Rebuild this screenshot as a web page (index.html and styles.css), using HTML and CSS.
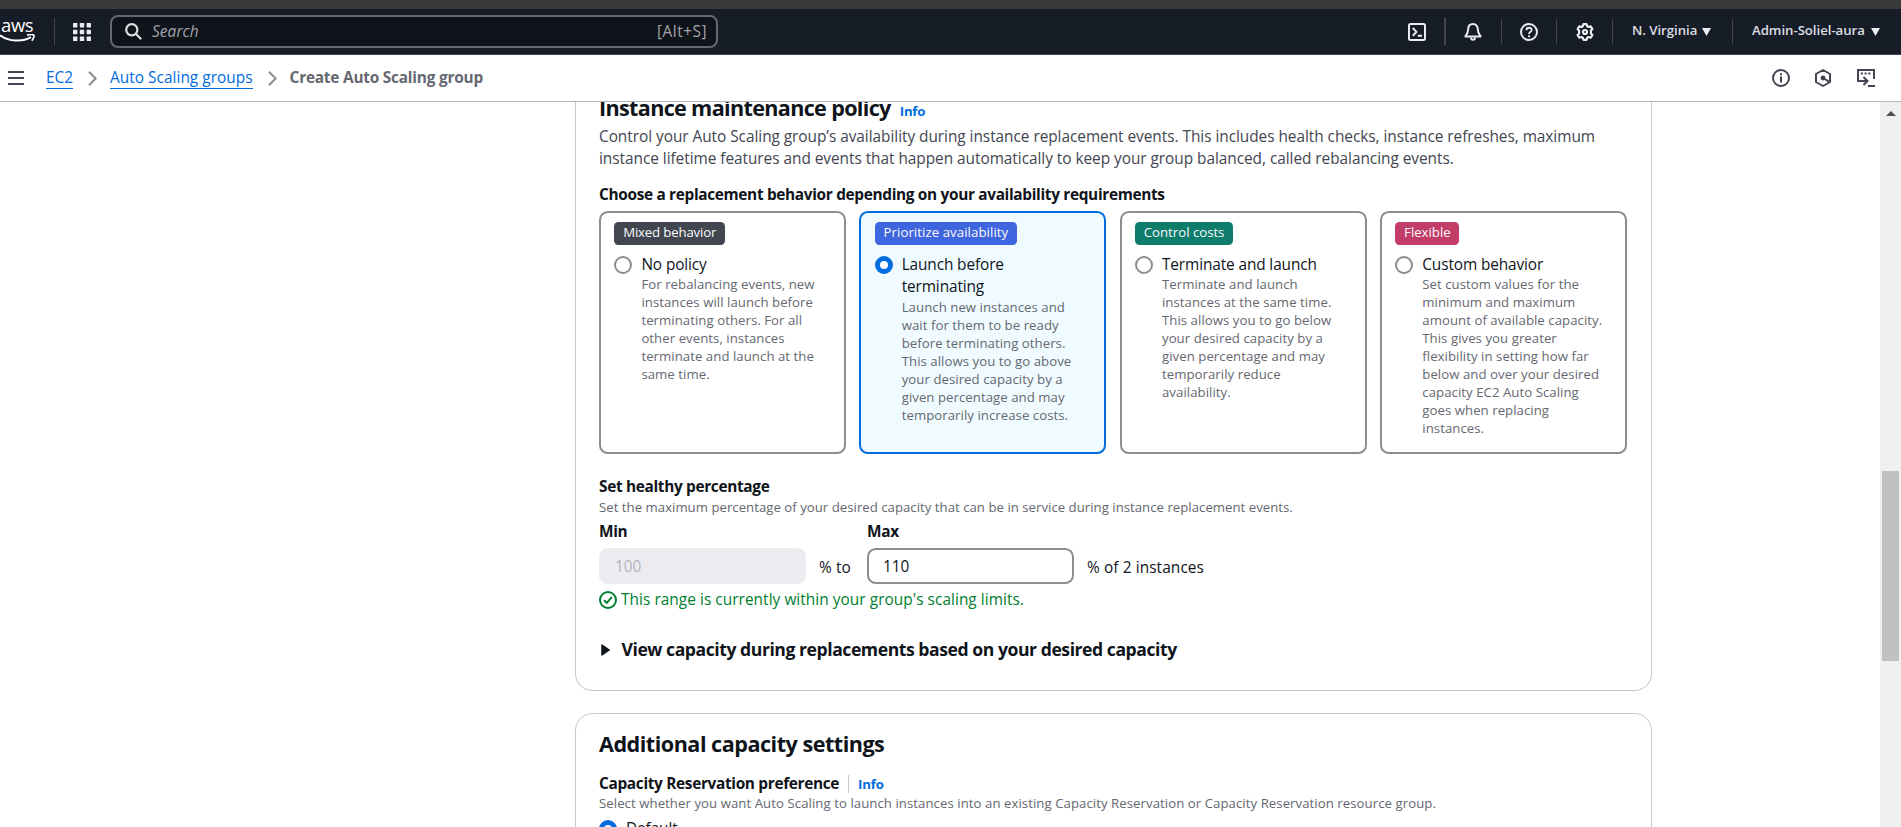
FILE: index.html
```html
<!DOCTYPE html>
<html lang="en">
<head>
<meta charset="utf-8">
<title>Create Auto Scaling group</title>
<link rel="stylesheet" href="styles.css">
</head>
<body>
<div class="window-edge"></div>
<header class="navbar">
  <div class="logo">
    <span class="logo-text">aws</span>
    <svg class="logo-smile" width="36" height="10" viewBox="0 0 36 10" fill="none" stroke="#fff" stroke-width="2"><path d="M0 1.2C9 7.6 22 8.400 31 3.200"/><path d="M27 1.200c3-.8 6-.9 6.800 0 .6 1-.6 4-2 5.600" stroke-width="1.700"/></svg>
  </div>
  <span class="sep sep-logo"></span>
  <svg class="apps" width="18" height="18" viewBox="0 0 18 18" fill="#ebebf0"><rect width="4.400" height="4.400" rx=".6"/><rect x="6.800" width="4.400" height="4.400" rx=".6"/><rect x="13.600" width="4.400" height="4.400" rx=".6"/><rect y="6.800" width="4.400" height="4.400" rx=".6"/><rect x="6.800" y="6.800" width="4.400" height="4.400" rx=".6"/><rect x="13.600" y="6.800" width="4.400" height="4.400" rx=".6"/><rect y="13.600" width="4.400" height="4.400" rx=".6"/><rect x="6.800" y="13.600" width="4.400" height="4.400" rx=".6"/><rect x="13.600" y="13.600" width="4.400" height="4.400" rx=".6"/></svg>
  <div class="search">
    <svg width="17" height="17" viewBox="0 0 17 17" fill="none" stroke="#dedee3" stroke-width="2.200"><circle cx="6.800" cy="6.800" r="5.600"/><path d="M10.800 10.800l5.400 5.400"/></svg>
    <span class="search-text">Search</span>
    <span class="search-key">[Alt+S]</span>
  </div>
  <div class="nav-right">
    <svg class="n-term" width="18" height="18" viewBox="0 0 18 18" fill="none" stroke="#ebebf0" stroke-width="2"><rect x="1" y="1" width="16" height="16" rx="1.500"/><path d="M4.800 5l3.600 3.900-3.600 3.900M9.800 12.800h4.200"/></svg>
    <span class="sep sep-wide"></span>
    <svg class="n-bell" width="18" height="18" viewBox="0 0 18 18" fill="none" stroke="#ebebf0" stroke-width="2" stroke-linejoin="round"><path d="M9 1C5.800 1 4.200 3.400 4.200 6.200c0 3.600-1 4.800-2.800 7.200h15.200c-1.800-2.400-2.800-3.600-2.800-7.200C13.800 3.400 12.200 1 9 1z"/><path d="M7 14.600c0 3 4 3 4 0"/></svg>
    <span class="sep s1"></span>
    <svg class="n-help" width="18" height="18" viewBox="0 0 18 18" fill="none" stroke="#ebebf0" stroke-width="2"><circle cx="9" cy="9" r="8"/><path d="M6.400 7.200C6.400 3.900 11.700 4 11.700 7c0 1.900-2.700 1.900-2.700 4M9 12.200v2" stroke-width="1.800"/></svg>
    <span class="sep s2"></span>
    <svg class="n-gear" width="18" height="18" viewBox="0 0 18 18" fill="none" stroke="#ebebf0" stroke-width="2.200" stroke-linejoin="round"><path d="M7.400 1.200h3.200l.6 2.100 1.300.7 2.200-.7 1.700 2.700-1.500 1.500v3l1.500 1.500-1.700 2.700-2.200-.7-1.300.7-.6 2.100H7.400l-.6-2.100-1.300-.7-2.200.7-1.700-2.700 1.500-1.500v-3L1.600 6l1.700-2.700 2.200.7 1.300-.7z"/><circle cx="9" cy="9" r="2"/></svg>
    <span class="sep s3"></span>
    <span class="nav-text region">N. Virginia</span>
    <svg class="caret" width="9" height="8" viewBox="0 0 9 8"><path d="M0 0h9L4.500 8z" fill="#ebebf0"/></svg>
    <span class="sep s4"></span>
    <span class="nav-text user">Admin-Soliel-aura</span>
    <svg class="caret" width="9" height="8" viewBox="0 0 9 8"><path d="M0 0h9L4.500 8z" fill="#ebebf0"/></svg>
  </div>
</header>
<div class="crumbs">
  <svg class="burger" width="16" height="14" viewBox="0 0 16 14" fill="#424650"><path d="M0 0h16v2H0zM0 6h16v2H0zM0 12h16v2H0z"/></svg>
  <a class="crumb">EC2</a>
  <svg class="chev" width="9" height="15" viewBox="0 0 9 15" fill="none" stroke="#8c8c94" stroke-width="2"><path d="M1 .8l6.600 6.700L1 14.200"/></svg>
  <a class="crumb crumb-groups">Auto Scaling groups</a>
  <svg class="chev" width="9" height="15" viewBox="0 0 9 15" fill="none" stroke="#8c8c94" stroke-width="2"><path d="M1 .8l6.600 6.700L1 14.200"/></svg>
  <span class="crumb-current">Create Auto Scaling group</span>
  <div class="tools">
    <svg width="18" height="18" viewBox="0 0 18 18" fill="none" stroke="#424650" stroke-width="2"><circle cx="9" cy="9" r="8"/><path d="M9 4.200v2M9 7.600v6"/></svg>
    <svg class="tool-hex" width="16" height="18" viewBox="0 0 16 18" fill="none" stroke="#424650" stroke-width="2" stroke-linejoin="round"><path d="M8 1l7 4v8l-7 4-7-4V5z"/><circle cx="8" cy="9" r="2.400" fill="#424650" stroke="none"/><path d="M8 9l6.500 3.800"/></svg>
    <svg width="18" height="18" viewBox="0 0 18 18" fill="none" stroke="#424650" stroke-width="2"><path d="M5.500 12H1V1h16v9"/><path d="M3.800 4.500h2M7.600 4.500h2M11.400 4.500h2"/><path d="M4.500 12H10M6.500 8l4 4-4 4M11 17h7"/></svg>
  </div>
</div>
<div class="body">
  <main class="main">
    <section class="panel panel-first">
      <div class="heading-row"><h2 class="h2 h2-policy">Instance maintenance policy</h2><a class="info">Info</a></div>
      <p class="desc">Control your Auto Scaling group’s availability during instance replacement events. This includes health checks, instance refreshes, maximum<br>instance lifetime features and events that happen automatically to keep your group balanced, called rebalancing events.</p>
      <div class="label label-choose">Choose a replacement behavior depending on your availability requirements</div>
      <div class="tiles">
        <div class="tile">
          <span class="badge badge-grey">Mixed behavior</span>
          <div class="option"><span class="radio"></span><div><div class="opt-title">No policy</div>
            <div class="hint hint-tile">For rebalancing events, new<br>instances will launch before<br>terminating others. For all<br>other events, instances<br>terminate and launch at the<br>same time.</div></div></div>
        </div>
        <div class="tile tile-on">
          <span class="badge badge-blue">Prioritize availability</span>
          <div class="option"><span class="radio radio-on"></span><div><div class="opt-title">Launch before<br>terminating</div>
            <div class="hint">Launch new instances and<br>wait for them to be ready<br>before terminating others.<br>This allows you to go above<br>your desired capacity by a<br>given percentage and may<br>temporarily increase costs.</div></div></div>
        </div>
        <div class="tile">
          <span class="badge badge-green">Control costs</span>
          <div class="option"><span class="radio"></span><div><div class="opt-title">Terminate and launch</div>
            <div class="hint hint-tile">Terminate and launch<br>instances at the same time.<br>This allows you to go below<br>your desired capacity by a<br>given percentage and may<br>temporarily reduce<br>availability.</div></div></div>
        </div>
        <div class="tile">
          <span class="badge badge-red">Flexible</span>
          <div class="option"><span class="radio"></span><div><div class="opt-title">Custom behavior</div>
            <div class="hint hint-tile">Set custom values for the<br>minimum and maximum<br>amount of available capacity.<br>This gives you greater<br>flexibility in setting how far<br>below and over your desired<br>capacity EC2 Auto Scaling<br>goes when replacing<br>instances.</div></div></div>
        </div>
      </div>
      <div class="label label-healthy">Set healthy percentage</div>
      <div class="hint hint-top">Set the maximum percentage of your desired capacity that can be in service during instance replacement events.</div>
      <div class="range">
        <div class="field"><div class="label">Min</div><div class="input input-off">100</div></div>
        <span class="unit unit-to">% to</span>
        <div class="field"><div class="label">Max</div><div class="input">110</div></div>
        <span class="unit">% of 2 instances</span>
      </div>
      <div class="ok">
        <svg width="18" height="18" viewBox="0 0 18 18" fill="none" stroke="#00802f" stroke-width="2"><circle cx="9" cy="9" r="8"/><path d="M5 9.200l2.800 2.700 5-5.700"/></svg>
        <span>This range is currently within your group's scaling limits.</span>
      </div>
      <div class="expander">
        <svg width="9" height="12" viewBox="0 0 9 12"><path d="M1 1v10l7.200-5z" fill="#0f141a" stroke="#0f141a" stroke-width="1.500" stroke-linejoin="round"/></svg>
        <span>View capacity during replacements based on your desired capacity</span>
      </div>
    </section>
    <section class="panel panel-next">
      <h2 class="h2 h2-extra">Additional capacity settings</h2>
      <div class="pref"><span class="label">Capacity Reservation preference</span><span class="pref-sep"></span><a class="info">Info</a></div>
      <div class="hint hint-pref">Select whether you want Auto Scaling to launch instances into an existing Capacity Reservation or Capacity Reservation resource group.</div>
      <div class="option option-default"><span class="radio radio-on"></span><div class="opt-title">Default</div></div>
    </section>
  </main>
  <div class="scrollbar">
    <svg class="scroll-up" width="10" height="5" viewBox="0 0 10 5"><path d="M5 0l5 5H0z" fill="#505050"/></svg>
    <div class="thumb"></div>
  </div>
</div>
</body>
</html>
```

FILE: styles.css
```css
* { box-sizing: border-box; }
html, body { height: 100%; }
body {
  margin: 0;
  height: 827px;
  overflow: hidden;
  display: flex;
  flex-direction: column;
  background: #fff;
  color: #0f141a;
  font: 15.4px/22px "Open Sans", "Noto Sans", sans-serif;
  white-space: nowrap;
}
svg { display: block; flex: none; }
span, a, h2 { flex: none; }

.window-edge { height: 9px; flex: none; background: #3a3a3a; }

.navbar {
  flex: none;
  height: 46px;
  background: #161d26;
  border-bottom: 1px solid #424650;
  display: flex;
  align-items: flex-start;
}
.logo { width: 36px; padding: 4px 0 0 1px; color: #fff; }
.logo-text { display: block; font-size: 18.5px; font-weight: 500; line-height: 24px; height: 22px; letter-spacing: -0.4px; }
.logo-smile { margin: -1px 0 0 -1px; }
.sep { width: 1px; height: 25px; margin-top: 10px; background: #424650; }
.sep-logo { height: 27px; margin: 9px 18px 0 18px; }
.apps { margin-top: 14px; }
.search {
  width: 608px;
  height: 33px;
  margin: 6px 0 0 19px;
  padding: 0 9px 0 13px;
  border: 2px solid #656871;
  border-radius: 8px;
  background: #0f141a;
  display: flex;
  align-items: center;
  color: #a4a4ad;
}
.search-text { margin: 0 auto 0 10px; font-style: italic; letter-spacing: 0.1px; }
.search-key { letter-spacing: 0.5px; }
.nav-right { display: flex; margin-left: auto; padding-right: 21px; }
.nav-right svg { margin-top: 14px; }
.sep-wide { width: 2px; height: 27px; margin: 9px 18px 0 18px; }
.s1 { margin-left: 19px; margin-right: 18px; }
.s2 { margin-left: 18px; margin-right: 19px; }
.s3 { margin-left: 18px; margin-right: 19px; }
.s4 { margin-left: 21px; margin-right: 19px; }
.nav-right .caret { margin-top: 19px; margin-left: 7px; }
.nav-text { font-size: 13.2px; font-weight: 550; color: #dedee3; margin-top: 10px; line-height: 22px; letter-spacing: -0.03px; }
.region { width: 63px; }
.user { width: 112px; }

.crumbs {
  flex: none;
  height: 47px;
  border-bottom: 1px solid #b4b4bb;
  display: flex;
  align-items: center;
  padding-left: 8px;
}
.burger { margin-right: 22px; }
.crumb { color: #006ce0; height: 22px; border-bottom: 1px solid #006ce0; line-height: 22px; }
.crumb-groups { letter-spacing: 0.03px; }
.chev { margin: 0 13px 0 15px; }
.crumb-current { color: #656871; font-weight: 700; letter-spacing: -0.22px; }
.tools { margin-left: auto; padding-right: 26px; display: flex; }
.tool-hex { margin: 0 26px 0 25px; }

.body { flex: 1; min-height: 0; display: flex; }
.main { flex: 1; min-width: 0; overflow: hidden; padding-left: 575px; }
.panel {
  width: 1077px;
  border: 1px solid #c6c6cd;
  border-radius: 17.6px;
  padding: 0 23px;
  display: flow-root;
}
.panel-first { border-top: 0; border-radius: 0 0 17.6px 17.6px; height: 589px; }
.panel-next { margin-top: 22px; height: 240px; padding-top: 17px; }

.heading-row { display: flex; align-items: baseline; margin-top: -7px; height: 26px; }
.h2 { margin: 0; font-size: 21.6px; line-height: 26px; font-weight: 700; }
.h2-policy { letter-spacing: -0.67px; }
.h2-extra { letter-spacing: -0.5px; }
.info { font-size: 13.2px; font-weight: 700; line-height: 18px; color: #006ce0; margin-left: 9px; letter-spacing: -0.2px; }
.desc { margin: 5px 0 0; color: #424650; letter-spacing: -0.04px; }
.label { font-weight: 700; letter-spacing: -0.33px; }
.label-choose { margin-top: 14px; }

.tiles { display: grid; grid-template-columns: repeat(4, 1fr); gap: 13.2px; height: 243px; margin-top: 5px; width: 1028px; }
.tile { border: 2px solid #8c8c94; border-radius: 8.8px; padding: 9px 0 0 13.4px; }
.tile-on { border-color: #006ce0; background: #f0fbff; }
.badge {
  display: block;
  width: fit-content;
  height: 23px;
  padding: 0 8.8px;
  border-radius: 4.4px;
  color: #f9f9fa;
  font-size: 13.2px;
  line-height: 21px;
  font-weight: 500;
}
.badge-grey { background: #424650; letter-spacing: -0.15px; }
.badge-blue { background: #4066df; letter-spacing: 0.08px; }
.badge-green { background: #0e7c6b; }
.badge-red { background: #c33d69; }
.option { display: flex; gap: 9px; margin-top: 9px; }
.option-default { margin-top: 6px; }
.radio { width: 18px; height: 18px; margin-top: 2px; border: 2px solid #8c8c94; border-radius: 50%; background: #fff; }
.radio-on { border: 5.5px solid #006ce0; }
.opt-title { letter-spacing: -0.12px; }
.hint { font-size: 13.2px; line-height: 18px; color: #656871; letter-spacing: 0.05px; }
.hint-tile { margin-top: -1px; }
.label-healthy { margin-top: 22px; }
.hint-top { letter-spacing: 0.02px; }

.range { display: flex; align-items: flex-end; margin-top: 5px; }
.input { width: 207px; height: 36px; margin-top: 5px; border: 2px solid #8c8c94; border-radius: 8.8px; padding: 6px 14px 0; background: #fff; }
.input-off { background: #ebebf0; border-color: #ebebf0; color: #b4b4bb; }
.unit { margin: 0 0 5px 13px; letter-spacing: 0.1px; }
.unit-to { width: 48px; }
.ok { display: flex; gap: 4px; align-items: center; margin-top: 5px; height: 22px; color: #00802f; letter-spacing: 0.05px; }
.expander { display: flex; align-items: center; gap: 11.5px; margin: 27px 0 0 2px; font-size: 17.6px; font-weight: 700; letter-spacing: -0.45px; }
.expander svg { margin-top: 2px; }

.pref { display: flex; align-items: center; margin-top: 16px; height: 22px; }
.pref-sep { width: 1px; height: 18px; margin-left: 9px; background: #c6c6cd; }
.hint-pref { margin-top: -1px; letter-spacing: 0.057px; }

.scrollbar { width: 21px; flex: none; background: #f0f0f0; }
.scroll-up { margin: 9px auto 0 6px; }
.thumb { width: 17px; height: 190px; margin: 355px 0 0 2px; background: #c1c1c1; }
```
